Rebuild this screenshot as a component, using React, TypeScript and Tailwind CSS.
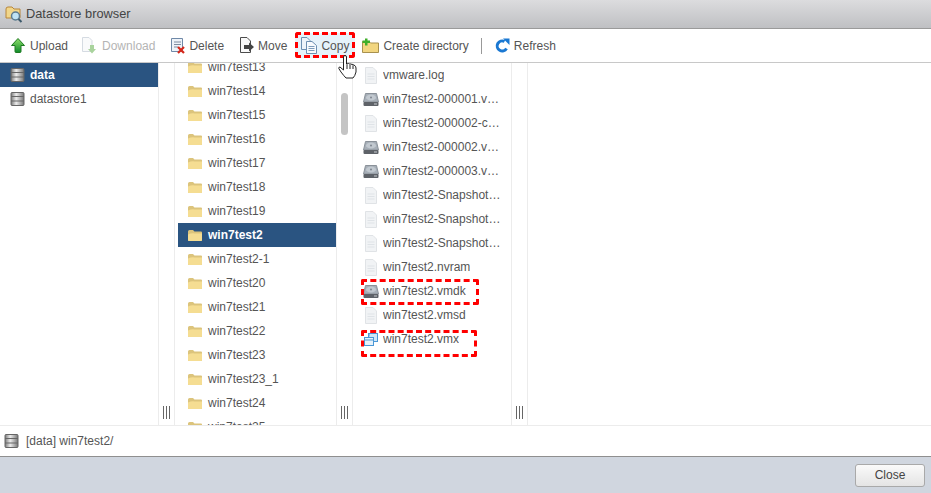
import React from "react";

function DbIcon({ className = "" }: { className?: string }) {
  return (
    <svg width="15" height="14" viewBox="0 0 15 14" className={className}>
      <defs>
        <linearGradient id="dbg" x1="0" x2="1" y1="0" y2="0">
          <stop offset="0" stopColor="#7a7a7a" />
          <stop offset="0.4" stopColor="#ececec" />
          <stop offset="1" stopColor="#777" />
        </linearGradient>
      </defs>
      <rect x="1" y="0.5" width="13" height="13" rx="1" fill="url(#dbg)" stroke="#666" />
      <path d="M1 4.500h13M1 9h13" stroke="#666" />
    </svg>
  );
}

function FolderIcon() {
  return (
    <svg width="16" height="13" viewBox="0 0 16 13" className="shrink-0">
      <path d="M1 2.500Q1 1 2.500 1H6l1.500 1.500H14Q15 2.500 15 3.500V11Q15 12 14 12H2Q1 12 1 11Z" fill="#dcc47c" />
      <path d="M1 5.500Q5 3.500 8 4.500H15V11Q15 12 14 12H2Q1 12 1 11Z" fill="#f5dd92" />
    </svg>
  );
}

function FileIcon() {
  return (
    <svg width="16" height="17" viewBox="0 0 16 17" className="shrink-0">
      <path d="M2.500 .5H10L13.500 4V16.500H2.500Z" fill="#f1f3f5" stroke="#e0e3e6" />
      <path d="M4.500 7h7M4.500 9.500h7M4.500 12h7" stroke="#dfe3e7" />
    </svg>
  );
}

function DiskIcon() {
  return (
    <svg width="16" height="15" viewBox="0 0 16 15" className="shrink-0">
      <path d="M2.500 1.500H13.500L15.500 10H.5Z" fill="#a7afb8" stroke="#8a9199" />
      <ellipse cx="8" cy="5.500" rx="5" ry="3" fill="#c2c9d0" />
      <circle cx="8" cy="5.500" r="1" fill="#7f8790" />
      <rect x=".5" y="10" width="15" height="4" rx="1" fill="#5e6268" />
      <rect x="11" y="11.500" width="3" height="1" fill="#c8ccd0" />
    </svg>
  );
}

function VmxIcon() {
  return (
    <svg width="16" height="15" viewBox="0 0 16 15" className="shrink-0">
      <rect x="5.500" y="1.500" width="9" height="8" fill="#cfe6f8" stroke="#4a97d6" />
      <rect x="1.500" y="5.500" width="9" height="8" fill="#e6f2fb" stroke="#4a97d6" />
      <path d="M2 8h8M6 1.500v3" stroke="#4a97d6" />
    </svg>
  );
}

function ToolBtn({ icon, label, disabled, className = "" }: { icon: React.ReactNode; label: string; disabled?: boolean; className?: string }) {
  return (
    <div className={`flex items-center h-[25px] ${disabled ? "text-[#b4b4b4]" : "text-[#555]"} ${className}`}>
      {icon}
      <span>{label}</span>
    </div>
  );
}

function Gutter() {
  return (
    <div className="w-[17px] shrink-0 border-x border-[#ececec] flex items-end justify-center pb-[6px]">
      <svg width="7" height="13" viewBox="0 0 7 13">
        <path d="M.5 0v13M3.500 0v13M6.500 0v13" stroke="#666" />
      </svg>
    </div>
  );
}

const folders = [
  "win7test13", "win7test14", "win7test15", "win7test16", "win7test17", "win7test18", "win7test19",
  "win7test2", "win7test2-1", "win7test20", "win7test21", "win7test22", "win7test23", "win7test23_1",
  "win7test24", "win7test25",
];

const files: [string, "file" | "disk" | "vmx"][] = [
  ["vmware.log", "file"],
  ["win7test2-000001.vmdk", "disk"],
  ["win7test2-000002-ctk.vmdk", "file"],
  ["win7test2-000002.vmdk", "disk"],
  ["win7test2-000003.vmdk", "disk"],
  ["win7test2-Snapshot1.vmsn", "file"],
  ["win7test2-Snapshot2.vmsn", "file"],
  ["win7test2-Snapshot3.vmsn", "file"],
  ["win7test2.nvram", "file"],
  ["win7test2.vmdk", "disk"],
  ["win7test2.vmsd", "file"],
  ["win7test2.vmx", "vmx"],
];

export default function App() {
  return (
    <div className="relative w-[931px] h-[493px] overflow-hidden bg-white flex flex-col text-[12px] text-[#555] font-['Liberation_Sans',Arial,sans-serif]">
      {/* title bar */}
      <div className="h-[29px] shrink-0 flex items-center gap-[3px] pl-[5px] border-b border-[#9a9a9a] bg-gradient-to-b from-[#dcdcde] to-[#bfc0c3]">
        <svg width="18" height="18" viewBox="0 0 18 18" className="shrink-0">
          <path d="M1 4Q1 2 3 2H7L9 4H15V13H1Z" fill="#f1d68a" stroke="#b8863a" />
          <circle cx="10.500" cy="11" r="4" fill="#bfe3f5" stroke="#5b7b8f" strokeWidth="1.500" />
          <path d="M13.500 14l3 3" stroke="#3d5a6c" strokeWidth="2" />
        </svg>
        <span className="text-[#444] text-[12.8px]">Datastore browser</span>
      </div>

      {/* toolbar */}
      <div className="h-[34px] shrink-0 flex items-center pl-[11px] border-b border-[#c8c8c8]">
        <ToolBtn
          label="Upload"
          className="gap-[5px]"
          icon={
            <svg width="14" height="15" viewBox="0 0 14 15">
              <defs>
                <linearGradient id="upg" x1="0" x2="0" y1="0" y2="1">
                  <stop offset="0" stopColor="#8fe06a" />
                  <stop offset="1" stopColor="#0f8a2a" />
                </linearGradient>
              </defs>
              <path d="M7 .5L13.500 7.500H10V13.500Q10 14.500 9 14.500H5Q4 14.500 4 13.500V7.500H.5Z" fill="url(#upg)" stroke="#1f7a22" strokeLinejoin="round" />
            </svg>
          }
        />
        <ToolBtn
          label="Download"
          disabled
          className="ml-[13px] gap-[5px]"
          icon={
            <svg width="16" height="17" viewBox="0 0 16 17">
              <path d="M1.500 .5H8L11 3.500V14.500H1.500Z" fill="#f9fafb" stroke="#d5dbe2" />
              <path d="M9 8h4v4h2l-4 4.500L7 12h2Z" fill="#a9d39d" />
            </svg>
          }
        />
        <ToolBtn
          label="Delete"
          className="ml-[15px] gap-[3px]"
          icon={
            <svg width="16" height="17" viewBox="0 0 16 17">
              <path d="M1.500 1.500H12.500V14.500H1.500Z" fill="#eef3f9" stroke="#6f89a8" />
              <path d="M4 5h7M4 7.500h7M4 10h4" stroke="#7d8ba0" />
              <path d="M8 10l6 6M14 10l-6 6" stroke="#d5281b" strokeWidth="2.200" />
            </svg>
          }
        />
        <ToolBtn
          label="Move"
          className="ml-[15px] gap-[3px]"
          icon={
            <svg width="16" height="17" viewBox="0 0 16 17">
              <path d="M1.500 .5H8L11.500 4V15.500H1.500Z" fill="#fafafa" stroke="#4c4c4c" />
              <path d="M5 8h5V5.500L15 10l-5 4.500V12H5Z" fill="#444" />
            </svg>
          }
        />
        <div className="ml-[8px] w-[60px] h-[25px] flex items-center gap-[3px] pl-[6px] bg-[#e6f3fb]">
          <svg width="17" height="17" viewBox="0 0 17 17" className="shrink-0">
            <path d="M.5 .5H6L9 3.500V12.500H.5Z" fill="#eef4fa" stroke="#6d8fb1" />
            <path d="M5.500 4.500H11L15.500 8.500V16.500H5.500Z" fill="#f8fbfe" stroke="#6d8fb1" />
            <path d="M7.500 9.500h6M7.500 11.500h6M7.500 13.500h6" stroke="#7d9cbb" />
          </svg>
          <span>Copy</span>
        </div>
        <ToolBtn
          label="Create directory"
          className="ml-[7px] gap-[4px]"
          icon={
            <svg width="17" height="15" viewBox="0 0 17 15">
              <path d="M.5 3.500H7L8.500 5H16.500V14.500H.5Z" fill="#f2d680" stroke="#a8914f" />
              <path d="M3 0.5h2.500V2.500H8V5H5.500V7.500H3V5H.5V2.500H3Z" fill="#3fae2a" />
            </svg>
          }
        />
        <div className="ml-[12px] w-px h-[16px] bg-[#999]" />
        <ToolBtn
          label="Refresh"
          className="ml-[13px] gap-[4px]"
          icon={
            <svg width="15" height="15" viewBox="0 0 15 15">
              <path d="M11.500 10.500A5 5 0 1 1 9.500 3.500" fill="none" stroke="#1a78d2" strokeWidth="3" />
              <path d="M8 .5h6.500V7Z" fill="#1a78d2" />
            </svg>
          }
        />
      </div>

      {/* panes */}
      <div className="flex-1 min-h-0 flex">
        <div className="w-[158px] shrink-0">
          <div className="h-[24px] flex items-center gap-[5px] pl-[10px] bg-[#2a5481] text-white font-bold">
            <DbIcon />
            <span>data</span>
          </div>
          <div className="h-[24px] flex items-center gap-[5px] pl-[10px]">
            <DbIcon />
            <span>datastore1</span>
          </div>
        </div>
        <Gutter />
        <div className="relative w-[161px] shrink-0 overflow-hidden pl-[3px]">
          <div className="-mt-[8px]">
            {folders.map((f) => (
              <div
                key={f}
                className={`h-[24px] flex items-center gap-[5px] pl-[9px] ${f === "win7test2" ? "bg-[#2a5481] text-white font-bold" : ""}`}
              >
                <FolderIcon />
                <span>{f}</span>
              </div>
            ))}
          </div>
        </div>
        <div className="relative w-[17px] shrink-0 border-x border-[#ececec] flex items-end justify-center pb-[6px]">
          <div className="absolute left-[4px] top-[30px] w-[7px] h-[42px] rounded-[4px] bg-[#c4c4c4]" />
          <svg width="7" height="13" viewBox="0 0 7 13">
            <path d="M.5 0v13M3.500 0v13M6.500 0v13" stroke="#666" />
          </svg>
        </div>
        <div className="w-[158px] shrink-0 overflow-hidden">
          {files.map(([name, kind]) => (
            <div key={name} className="h-[24px] flex items-center gap-[4px] pl-[10px] pr-[8px]">
              {kind === "file" ? <FileIcon /> : kind === "disk" ? <DiskIcon /> : <VmxIcon />}
              <span className="truncate">{name}</span>
            </div>
          ))}
        </div>
        <Gutter />
        <div className="flex-1" />
      </div>

      {/* status */}
      <div className="h-[31px] shrink-0 flex items-center gap-[7px] pl-[4px] border-t border-[#ececec]">
        <DbIcon />
        <span>[data] win7test2/</span>
      </div>

      {/* footer */}
      <div className="h-[37px] shrink-0 flex items-center justify-end pr-[6px] bg-[#d0d6df] border-t border-[#8f8f8f]">
        <div className="w-[70px] h-[23px] flex items-center justify-center rounded-[3px] border border-[#a9a9a9] bg-gradient-to-b from-[#fafafa] to-[#e4e4e4] text-[#444]">
          Close
        </div>
      </div>

      {/* annotations drawn over the screenshot */}
      <div className="absolute left-[295px] top-[32px] w-[60px] h-[26px] border-[3px] border-dashed border-[#f00] rounded-[3px]" />
      <div className="absolute left-[361px] top-[279px] w-[118px] h-[26px] border-[3px] border-dashed border-[#f00] rounded-[2px]" />
      <div className="absolute left-[361px] top-[330px] w-[116px] h-[27px] border-[3px] border-dashed border-[#f00] rounded-[2px]" />
      <svg width="20" height="24" viewBox="0 0 20 24" className="absolute left-[338px] top-[55px]">
        <path d="M5.500 2Q5.500 .5 7 .5T8.500 2V9L10.500 8.500 11 9 13 9 14 9.500 16 10Q18 11 18 13V17Q17 21 15 23H8Q6 21 3 17L.8 13.500Q.5 12 2 12L5.500 15Z" fill="#fff" stroke="#222" />
        <path d="M9 9.500V14M12 10V14M15 10.500V14" stroke="#222" />
      </svg>
    </div>
  );
}
